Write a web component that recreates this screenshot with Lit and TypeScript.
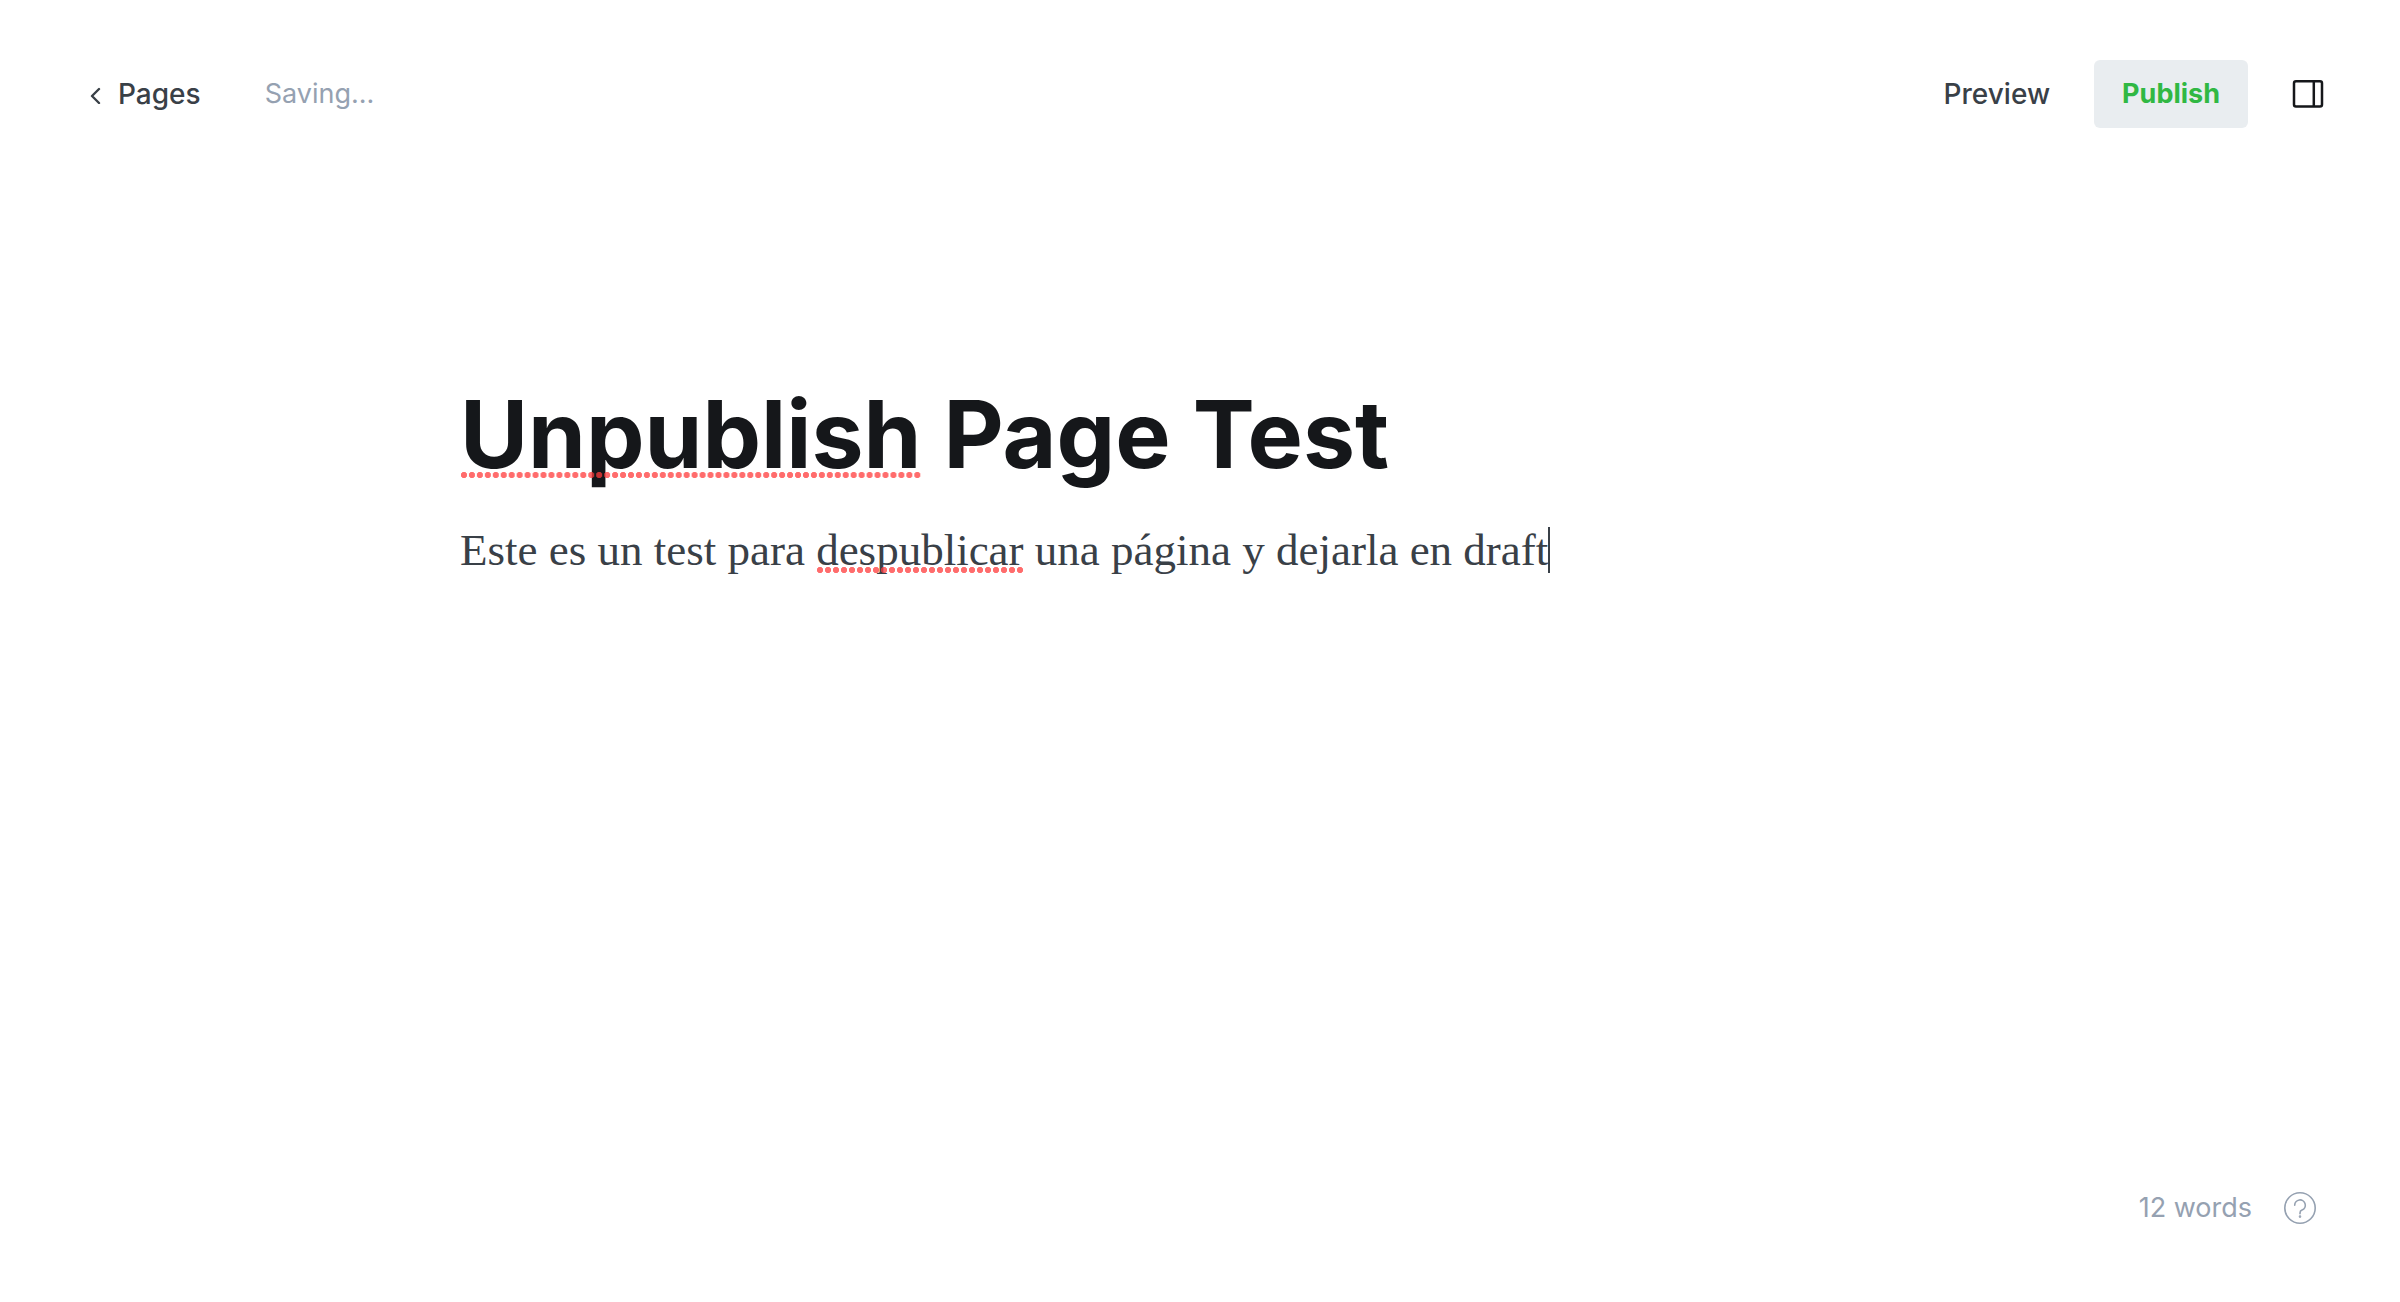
import { LitElement, html, css } from "lit";
import { customElement, property } from "lit/decorators.js";

@customElement("editor-header")
class EditorHeader extends LitElement {
  @property() status = "";

  static styles = css`
    :host {
      display: block;
    }
    .bar {
      display: flex;
      align-items: center;
      justify-content: space-between;
      padding: 60px 76px 0 88px;
    }
    .group {
      display: flex;
      align-items: center;
    }
    .back,
    .preview,
    .publish {
      font: 500 28px/32px Inter, sans-serif;
      color: #394047;
      text-decoration: none;
    }
    .back {
      display: flex;
      align-items: center;
      gap: 14px;
    }
    .chevron {
      width: 16px;
      height: 20px;
    }
    .status {
      margin-left: 64px;
      font: 400 27px/32px Inter, sans-serif;
      color: #95a1b1;
    }
    button {
      border: 0;
      padding: 0;
      background: none;
      cursor: pointer;
    }
    button.publish {
      height: 68px;
      margin: 0 44px;
      padding: 0 28px;
      border-radius: 6px;
      background: #e9edf0;
      color: #30b843;
      font-size: 27px;
      font-weight: 700;
    }
    .toggle {
      display: flex;
    }
    .toggle svg {
      width: 32px;
      height: 32px;
    }
  `;

  render() {
    return html`
      <header class="bar">
        <div class="group">
          <a class="back" href="#pages">
            <svg class="chevron" viewBox="0 0 16 20" fill="none" stroke="#394047" stroke-width="2.4" stroke-linecap="round" stroke-linejoin="round" aria-hidden="true">
              <path d="M11 5 4 12l7 7" />
            </svg>
            <span>Pages</span>
          </a>
          <span class="status" role="status">${this.status}</span>
        </div>
        <div class="group">
          <button class="preview" type="button">Preview</button>
          <button class="publish" type="button">Publish</button>
          <button class="toggle" type="button" aria-label="Settings">
            <svg viewBox="0 0 32 32" fill="none" stroke="#15171a" stroke-width="2.5" aria-hidden="true">
              <rect x="2" y="3.2" width="28" height="25.4" rx="2" />
              <path d="M21.8 3.2v25.4" />
            </svg>
          </button>
        </div>
      </header>
    `;
  }
}

@customElement("editor-canvas")
class EditorCanvas extends LitElement {
  static styles = css`
    :host {
      display: block;
    }
    .column {
      box-sizing: border-box;
      max-width: 1480px;
      margin: 0 auto;
      padding-top: 250px;
    }
    .title,
    .body {
      margin: 0;
      outline: none;
    }
    .title {
      font: 700 93px/112px Inter, sans-serif;
      color: #15171a;
    }
    .body {
      margin-top: 32px;
      font: 400 45px/56px Georgia, "Liberation Serif", serif;
      color: #394047;
    }
    .misspelt {
      position: relative;
    }
    .misspelt::after {
      content: "";
      position: absolute;
      left: 0;
      right: 0;
      bottom: 12px;
      height: 6px;
      background: radial-gradient(circle, rgba(255, 59, 59, 0.75) 0 2.8px, transparent 3.4px) 0 0 / 8px 6px round;
      pointer-events: none;
    }
    .body .misspelt::after {
      bottom: 2px;
    }
    .caret {
      display: inline-block;
      width: 2px;
      height: 46px;
      vertical-align: -8px;
      background: #394047;
    }
  `;

  render() {
    return html`
      <main class="column">
        <h1 class="title" contenteditable="true" spellcheck="false"><span class="misspelt">Unpublish</span> Page Test</h1>
        <p class="body" contenteditable="true" spellcheck="false">Este es un test para <span class="misspelt">despublicar</span> una página y dejarla en draft<span class="caret"></span></p>
      </main>
    `;
  }
}

@customElement("app-root")
class AppRoot extends LitElement {
  static styles = css`
    :host {
      display: flex;
      flex-direction: column;
      min-height: 100vh;
      background: #fff;
    }
    .canvas {
      flex: 1;
    }
    .footer {
      display: flex;
      align-items: center;
      justify-content: flex-end;
      gap: 32px;
      padding: 0 84px 78px 0;
      font: 400 27px/32px Inter, sans-serif;
      color: #95a1b1;
    }
    .help {
      display: flex;
    }
    .help svg {
      width: 32px;
      height: 32px;
    }
  `;

  render() {
    return html`
      <editor-header status="Saving..."></editor-header>
      <editor-canvas class="canvas"></editor-canvas>
      <footer class="footer">
        <span>12 words</span>
        <a class="help" href="#help" aria-label="Help">
          <svg viewBox="0 0 32 32" fill="none" stroke="#95a1b1" stroke-width="1.6" stroke-linecap="round" stroke-linejoin="round" aria-hidden="true">
            <circle cx="16" cy="16" r="15.2" />
            <path d="M10.7 13.2a5.3 5.3 0 1 1 7.3 4.9c-1.3.5-2 1.5-2 2.8v.8" />
            <circle cx="16" cy="24.6" r="0.5" fill="#95a1b1" />
          </svg>
        </a>
      </footer>
    `;
  }
}
